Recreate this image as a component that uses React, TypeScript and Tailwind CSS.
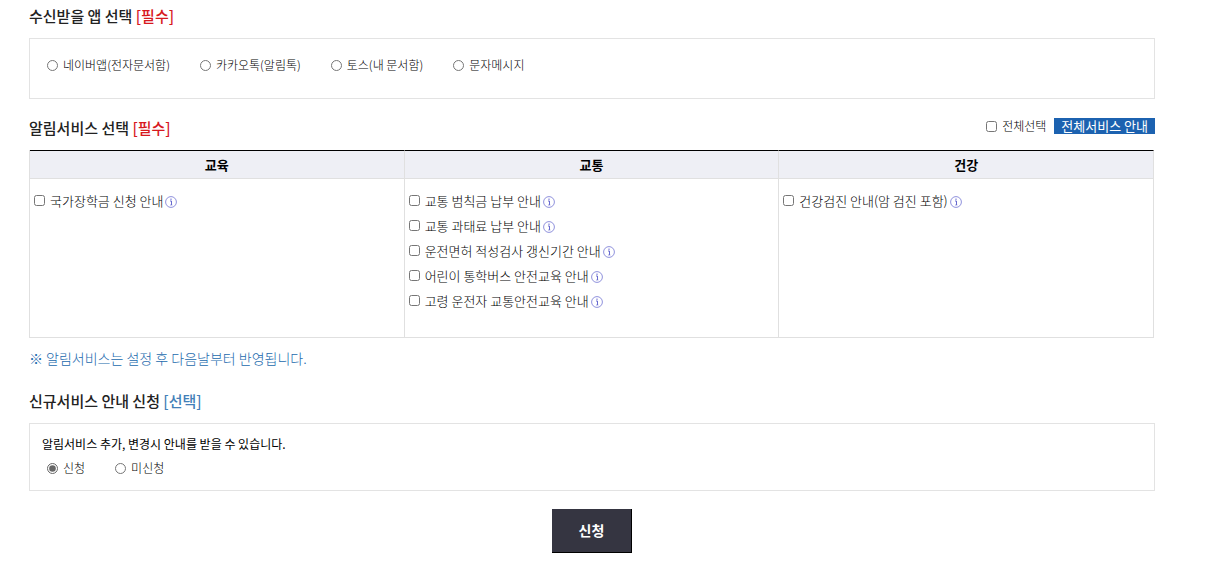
import { useState, type ReactNode } from 'react';

interface ServiceGroup {
  title: string;
  services: string[];
}

const APPS = ['네이버앱(전자문서함)', '카카오톡(알림톡)', '토스(내 문서함)', '문자메시지'];

const GROUPS: ServiceGroup[] = [
  { title: '교육', services: ['국가장학금 신청 안내'] },
  {
    title: '교통',
    services: [
      '교통 범칙금 납부 안내',
      '교통 과태료 납부 안내',
      '운전면허 적성검사 갱신기간 안내',
      '어린이 통학버스 안전교육 안내',
      '고령 운전자 교통안전교육 안내',
    ],
  },
  { title: '건강', services: ['건강검진 안내(암 검진 포함)'] },
];

const ALL_SERVICES = GROUPS.flatMap((group) => group.services);

const InfoIcon = () => (
  <svg viewBox="0 0 12 12" className="size-3" fill="none" aria-hidden>
    <circle cx="6" cy="6" r="5.4" stroke="#8f91dc" />
    <path d="M5 5h1.5v4" stroke="#6769cf" />
    <path d="M5 9h2.4" stroke="#6769cf" strokeWidth="0.6" />
    <rect x="5.4" y="2.6" width="1.2" height="1.2" fill="#6769cf" />
  </svg>
);

const Heading = ({ children, tag, tagClass }: { children: ReactNode; tag: string; tagClass: string }) => (
  <h2 className="text-[15px] leading-6 font-medium text-[#222]">
    {children} <span className={tagClass}>{tag}</span>
  </h2>
);

const Radio = ({
  name,
  label,
  checked,
  onChange,
}: {
  name: string;
  label: string;
  checked: boolean;
  onChange: () => void;
}) => (
  <label className="flex items-center gap-[5px] text-xs leading-5 font-light text-black">
    <input type="radio" name={name} checked={checked} onChange={onChange} className="size-[11px] accent-[#666]" />
    {label}
  </label>
);

export default function App() {
  const [app, setApp] = useState('');
  const [selected, setSelected] = useState<string[]>([]);
  const [notice, setNotice] = useState('신청');

  const toggle = (service: string) =>
    setSelected((prev) => (prev.includes(service) ? prev.filter((item) => item !== service) : [...prev, service]));

  const allChecked = selected.length === ALL_SERVICES.length;

  return (
    <form
      className="bg-white pt-1 pr-14 pb-5 pl-[29px] font-['Noto_Sans_CJK_KR',sans-serif]"
      onSubmit={(event) => event.preventDefault()}
    >
      <Heading tag="[필수]" tagClass="text-[#d7191f]">
        수신받을 앱 선택
      </Heading>
      <div className="mt-2.5 flex flex-wrap gap-x-[30px] border border-[#e3e3e3] px-[17px] pt-4 pb-[23px]">
        {APPS.map((name) => (
          <Radio key={name} name="app" label={name} checked={app === name} onChange={() => setApp(name)} />
        ))}
      </div>

      <div className="mt-[17px] flex items-start justify-between">
        <Heading tag="[필수]" tagClass="text-[#d7191f]">
          알림서비스 선택
        </Heading>
        <div className="flex h-5 items-center gap-2">
          <label className="flex items-center gap-[5px] text-xs font-light text-black">
            <input
              type="checkbox"
              checked={allChecked}
              onChange={() => setSelected(allChecked ? [] : ALL_SERVICES)}
              className="size-[11px]"
            />
            전체선택
          </label>
          <button type="button" className="bg-[#1c62b0] px-[7px] text-[13px] leading-4 text-white">
            전체서비스 안내
          </button>
        </div>
      </div>

      <div className="mt-2.5 pr-px">
        <table className="w-full table-fixed border-separate border-spacing-0 border-l border-[#e0e0e0]">
          <thead>
            <tr>
              {GROUPS.map((group) => (
                <th
                  key={group.title}
                  scope="col"
                  className="border-t border-r border-b border-t-black border-r-[#e0e0e0] border-b-[#e0e0e0] bg-[#eeeff5] text-[13px] leading-[27px] font-bold text-black"
                >
                  {group.title}
                </th>
              ))}
            </tr>
          </thead>
          <tbody>
            <tr>
              {GROUPS.map((group) => (
                <td key={group.title} className="border-r border-b border-[#e0e0e0] px-1 pt-[9px] pb-6 align-top">
                  {group.services.map((service) => (
                    <div key={service} className="flex h-[25px] items-center gap-0.5">
                      <label className="flex items-center gap-[5px] text-[13px] font-light text-black">
                        <input
                          type="checkbox"
                          checked={selected.includes(service)}
                          onChange={() => toggle(service)}
                          className="size-[11px]"
                        />
                        {service}
                      </label>
                      <button type="button" aria-label={`${service} 설명`} className="pt-0.5">
                        <InfoIcon />
                      </button>
                    </div>
                  ))}
                </td>
              ))}
            </tr>
          </tbody>
        </table>
      </div>

      <p className="mt-2 text-sm leading-6 font-light text-[#2269ad]">※ 알림서비스는 설정 후 다음날부터 반영됩니다.</p>

      <div className="mt-[19px]">
        <Heading tag="[선택]" tagClass="text-[#4380b8]">
          신규서비스 안내 신청
        </Heading>
      </div>
      <fieldset className="mt-2.5 border border-[#e3e3e3] px-3 pt-2 pb-3">
        <p className="text-xs leading-6 text-black">알림서비스 추가, 변경시 안내를 받을 수 있습니다.</p>
        <div className="flex gap-[30px] px-[5px] pt-0.5">
          {['신청', '미신청'].map((name) => (
            <Radio key={name} name="notice" label={name} checked={notice === name} onChange={() => setNotice(name)} />
          ))}
        </div>
      </fieldset>

      <div className="mt-[18px] flex justify-center">
        <button
          type="submit"
          className="h-11 w-20 border-r border-b border-black bg-[#353541] pb-0.5 text-sm font-bold text-white"
        >
          신청
        </button>
      </div>
    </form>
  );
}
